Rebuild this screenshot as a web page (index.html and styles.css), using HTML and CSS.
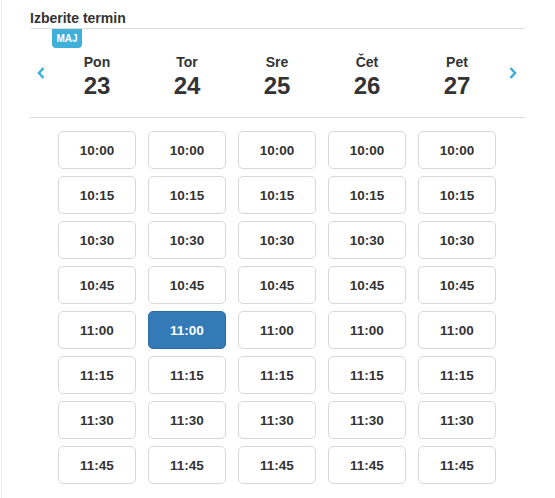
FILE: index.html
```html
<!DOCTYPE html>
<html lang="sl">
<head>
<meta charset="utf-8">
<title>Izberite termin</title>
<link rel="stylesheet" href="styles.css">
</head>
<body>
<div class="page">
  <div class="title">Izberite termin</div>
  <div class="week">
    <span class="month">MAJ</span>
    <div class="nav nav-prev">
      <svg width="8" height="12" viewBox="0 0 8 12"><polyline points="6.5,1 2,6 6.5,11" fill="none" stroke="#3fb0da" stroke-width="2.6"/></svg>
    </div>
    <div class="day"><div class="dname">Pon</div><div class="dnum">23</div></div>
    <div class="day"><div class="dname">Tor</div><div class="dnum">24</div></div>
    <div class="day"><div class="dname">Sre</div><div class="dnum">25</div></div>
    <div class="day"><div class="dname">Čet</div><div class="dnum">26</div></div>
    <div class="day"><div class="dname">Pet</div><div class="dnum">27</div></div>
    <div class="nav nav-next">
      <svg width="8" height="12" viewBox="0 0 8 12"><polyline points="1.5,1 6,6 1.5,11" fill="none" stroke="#3fb0da" stroke-width="2.6"/></svg>
    </div>
  </div>
  <div class="slots">
    <div class="slot">10:00</div><div class="slot">10:00</div><div class="slot">10:00</div><div class="slot">10:00</div><div class="slot">10:00</div>
    <div class="slot">10:15</div><div class="slot">10:15</div><div class="slot">10:15</div><div class="slot">10:15</div><div class="slot">10:15</div>
    <div class="slot">10:30</div><div class="slot">10:30</div><div class="slot">10:30</div><div class="slot">10:30</div><div class="slot">10:30</div>
    <div class="slot">10:45</div><div class="slot">10:45</div><div class="slot">10:45</div><div class="slot">10:45</div><div class="slot">10:45</div>
    <div class="slot">11:00</div><div class="slot selected">11:00</div><div class="slot">11:00</div><div class="slot">11:00</div><div class="slot">11:00</div>
    <div class="slot">11:15</div><div class="slot">11:15</div><div class="slot">11:15</div><div class="slot">11:15</div><div class="slot">11:15</div>
    <div class="slot">11:30</div><div class="slot">11:30</div><div class="slot">11:30</div><div class="slot">11:30</div><div class="slot">11:30</div>
    <div class="slot">11:45</div><div class="slot">11:45</div><div class="slot">11:45</div><div class="slot">11:45</div><div class="slot">11:45</div>
  </div>
</div>
</body>
</html>
```
FILE: styles.css
```css
html, body {
  margin: 0;
  padding: 0;
  background: #fff;
}
body {
  font-family: "Liberation Sans", Arial, Helvetica, sans-serif;
  color: #333;
}
.page {
  margin-left: 1px;
  border-left: 1px solid #ececec;
  min-height: 498px;
  box-sizing: border-box;
  padding-left: 28px;
}
.title {
  font-size: 14px;
  font-weight: bold;
  line-height: 16px;
  padding-top: 10px;
  margin-bottom: 2px;
  color: #333;
}
.week {
  position: relative;
  width: 495px;
  border-top: 1px solid #dcdcdc;
  border-bottom: 1px solid #dcdcdc;
  display: flex;
  padding: 25px 0 17px;
}
.month {
  position: absolute;
  left: 22px;
  top: 0;
  width: 30px;
  height: 19px;
  background: #3fb0da;
  color: #fff;
  font-size: 10px;
  font-weight: bold;
  line-height: 19px;
  text-align: center;
  border-radius: 0 0 4px 4px;
}
.nav {
  width: 22px;
  box-sizing: border-box;
  padding-top: 13px;
}
.nav svg { display: block; }
.nav-prev { padding-left: 7px; }
.nav-next { width: 23px; padding-left: 7px; }
.day {
  width: 90px;
  text-align: center;
}
.dname {
  font-size: 14px;
  font-weight: bold;
  line-height: 16px;
}
.dnum {
  font-size: 24px;
  font-weight: bold;
  line-height: 28px;
  margin-top: 2px;
}
.slots {
  display: grid;
  grid-template-columns: repeat(5, 78px);
  column-gap: 12px;
  row-gap: 7px;
  padding: 13px 0 0 28px;
}
.slot {
  height: 38px;
  box-sizing: border-box;
  border: 1px solid #d8d8d8;
  border-radius: 5px;
  background: #fff;
  display: flex;
  align-items: center;
  justify-content: center;
  font-size: 13.5px;
  font-weight: bold;
  color: #333;
}
.slot.selected {
  background: #337ab7;
  border-color: #2e6da4;
  color: #fff;
}
```
